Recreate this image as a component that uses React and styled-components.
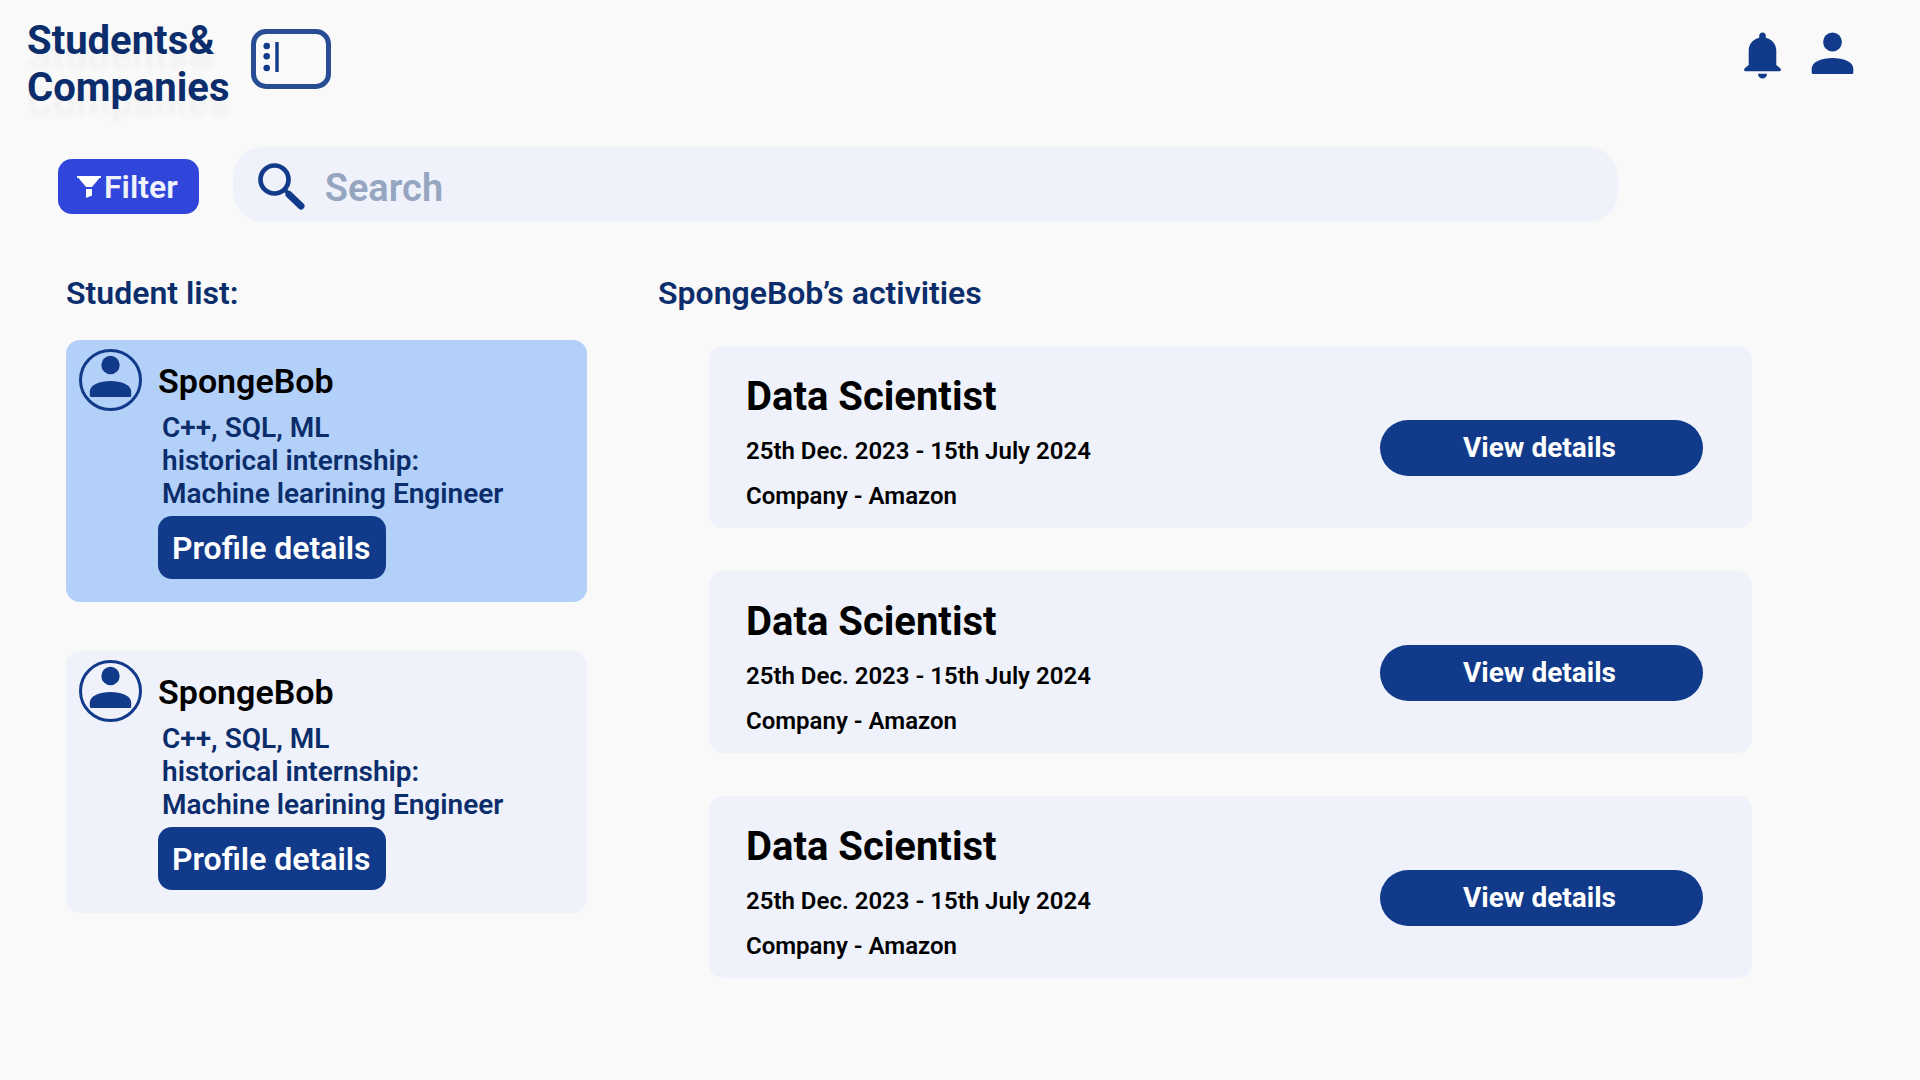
import React from "react";
import styled, { createGlobalStyle } from "styled-components";

const color = {
  page: "#f9f9f9",
  panel: "#eff2fa",
  selected: "#b3d1f8",
  brand: "#113a8a",
  heading: "#0b2d6b",
  accent: "#3046db",
  muted: "#96a5c0",
};

const GlobalStyle = createGlobalStyle`
  *, *::before, *::after { box-sizing: border-box; }
  body {
    margin: 0;
    background: ${color.page};
    font-family: Roboto, "Liberation Sans", sans-serif;
    font-weight: 600;
  }
  h1, h2, h3, p, ul { margin: 0; padding: 0; }
  ul { list-style: none; }
  button { font-family: inherit; border: 0; cursor: pointer; white-space: nowrap; }
  svg { display: block; flex: none; }
`;

const Header = styled.header`
  display: flex;
  align-items: flex-start;
  padding: 17px 66px 0 27px;
`;

const Brand = styled.h1`
  color: ${color.heading};
  font-size: 40px;
  font-weight: 700;
  line-height: 47px;
  text-shadow: 0 15px 4px rgba(0, 0, 0, 0.03);
`;

const IconButton = styled.button`
  display: flex;
  padding: 0;
  background: none;
  color: ${color.brand};
`;

const MenuButton = styled(IconButton)`
  margin: 12px auto 0 22px;
`;

const HeaderActions = styled.div`
  display: flex;
  gap: 30px;
  padding-top: 15px;
`;

const Toolbar = styled.form`
  display: flex;
  align-items: center;
  gap: 34px;
  padding: 36px 302px 0 58px;
`;

const FilterButton = styled.button`
  display: flex;
  align-items: center;
  gap: 3px;
  height: 55px;
  margin-top: 3px;
  padding: 2px 21px 0 19px;
  border-radius: 14px;
  background: ${color.accent};
  color: ${color.panel};
  font-size: 32px;
  font-weight: 600;
`;

const SearchBox = styled.label`
  flex: 1;
  display: flex;
  align-items: center;
  gap: 20px;
  height: 75px;
  padding: 4px 25px 0;
  border-radius: 30px;
  background: ${color.panel};
  color: ${color.brand};
`;

const SearchInput = styled.input`
  flex: 1;
  min-width: 0;
  padding: 3px 0 0;
  border: 0;
  outline: 0;
  background: none;
  color: ${color.heading};
  font: 600 38px/46px Roboto, "Liberation Sans", sans-serif;
  &::placeholder { color: ${color.muted}; opacity: 1; }
`;

const Main = styled.main`
  display: grid;
  grid-template-columns: 521px 1fr;
  gap: 71px;
  padding: 52px 168px 48px 66px;
`;

const SectionTitle = styled.h2`
  color: ${color.heading};
  font-size: 32px;
  font-weight: 600;
  line-height: 38px;
`;

const StudentList = styled.ul`
  display: grid;
  gap: 49px;
  padding-top: 28px;
`;

const StudentCard = styled.li`
  display: grid;
  grid-template-columns: 63px 1fr;
  column-gap: 16px;
  padding: 9px 13px 23px;
  border-radius: 14px;
  background: ${(p) => (p.$selected ? color.selected : color.panel)};
  color: ${color.brand};
`;

const StudentBody = styled.div`
  padding-top: 12px;
`;

const StudentName = styled.h3`
  color: #000;
  font-size: 34px;
  font-weight: 600;
  line-height: 40px;
`;

const StudentFacts = styled.div`
  padding: 10px 0 6px 4px;
  color: ${color.heading};
  font-size: 28px;
  line-height: 33px;
`;

const ProfileButton = styled.button`
  height: 63px;
  padding: 0 15px 0 14px;
  border-radius: 14px;
  background: ${color.brand};
  color: #fff;
  font-size: 32px;
  font-weight: 600;
`;

const ActivityList = styled.ul`
  display: grid;
  gap: 43px;
  padding: 34px 0 0 51px;
`;

const ActivityCard = styled.li`
  display: flex;
  align-items: flex-start;
  justify-content: space-between;
  padding: 27px 49px 18px 37px;
  border-radius: 14px;
  background: ${color.panel};
`;

const ActivityTitle = styled.h3`
  font-size: 40px;
  font-weight: 700;
  line-height: 47px;
`;

const ActivityFact = styled.p`
  padding-top: 17px;
  font-size: 24px;
  line-height: 28px;
`;

const ViewButton = styled.button`
  width: 323px;
  height: 56px;
  margin-top: 47px;
  padding: 0 4px 2px 0;
  border-radius: 28px;
  background: ${color.brand};
  color: #fff;
  font-size: 28px;
  font-weight: 700;
`;

const PanelIcon = () => (
  <svg width="80" height="60" viewBox="0 0 80 60" fill="currentColor" aria-hidden="true">
    <rect x="2.5" y="2.5" width="75" height="55" rx="12.5" fill="none" stroke="currentColor" strokeWidth="5" opacity="0.9" />
    <circle cx="15.7" cy="17" r="3.3" />
    <circle cx="15.7" cy="27.3" r="3.3" />
    <circle cx="15.7" cy="39" r="3.3" />
    <rect x="24.300" y="13" width="3.400" height="30" />
  </svg>
);

const BellIcon = () => (
  <svg width="37" height="47" viewBox="0 0 37 47" fill="currentColor" aria-hidden="true">
    <path d="M18.500 0.500C20.500 0.500 21.800 2 21.800 3.600V5.700C28 7 32.300 12 32.300 18.500V33L36.200 36.200C37.600 37.600 36.800 39.300 35 39.300H2C.2 39.300-.6 37.600.8 36.200L4.700 33V18.500C4.700 12 9 7 15.200 5.700V3.600C15.200 2 16.500 0.500 18.500 0.500Z" />
    <path d="M14 41.700H23C23 44.500 21 46.500 18.500 46.500S14 44.500 14 41.700Z" />
  </svg>
);

const PersonIcon = () => (
  <svg width="43" height="43" viewBox="0 0 43 43" fill="currentColor" aria-hidden="true">
    <circle cx="21.500" cy="10" r="9.400" />
    <path d="M.7 36.500C.7 30 11 26 21.500 26S42.300 30 42.300 36.500V40.500Q42.300 42 40.800 42H2.200Q.7 42 .7 40.500Z" />
  </svg>
);

const FilterIcon = () => (
  <svg width="24" height="22" viewBox="0 0 24 22" fill="#fff" aria-hidden="true">
    <path d="M0 0H24V2H22.500L15 11H9L1.500 2H0Z" />
    <path d="M9 13H15V19.500L9 22Z" />
  </svg>
);

const SearchIcon = () => (
  <svg width="47" height="47" viewBox="0 0 47 47" aria-hidden="true" fill="none" stroke="currentColor">
    <circle cx="16.500" cy="16.500" r="14" strokeWidth="4.700" />
    <path d="M27 27L30 30" strokeWidth="4" />
    <path d="M31 31.500L43 43" strokeWidth="7" strokeLinecap="round" />
  </svg>
);

const AvatarIcon = () => (
  <svg width="63" height="62" viewBox="0 0 63 62" fill="currentColor" aria-hidden="true">
    <ellipse cx="31.500" cy="31" rx="30" ry="29.500" fill="none" stroke="currentColor" strokeWidth="3" />
    <circle cx="31.500" cy="16" r="9.200" />
    <path d="M10.800 42.500C10.800 36 21 32 31.500 32S52.200 36 52.200 42.500V46.500Q52.200 48 50.700 48H12.300Q10.800 48 10.800 46.500Z" />
  </svg>
);

const students = [
  { id: 1, name: "SpongeBob", skills: "C++, SQL, ML", internship: "Machine learining Engineer", selected: true },
  { id: 2, name: "SpongeBob", skills: "C++, SQL, ML", internship: "Machine learining Engineer", selected: false },
];

const activities = [1, 2, 3].map((id) => ({
  id,
  title: "Data Scientist",
  dates: "25th Dec. 2023 - 15th July 2024",
  company: "Amazon",
}));

function Student({ student }) {
  return (
    <StudentCard $selected={student.selected}>
      <AvatarIcon />
      <StudentBody>
        <StudentName>{student.name}</StudentName>
        <StudentFacts>
          <p>{student.skills}</p>
          <p>historical internship:</p>
          <p>{student.internship}</p>
        </StudentFacts>
        <ProfileButton type="button">Profile details</ProfileButton>
      </StudentBody>
    </StudentCard>
  );
}

function Activity({ activity }) {
  return (
    <ActivityCard>
      <div>
        <ActivityTitle>{activity.title}</ActivityTitle>
        <ActivityFact>{activity.dates}</ActivityFact>
        <ActivityFact>Company - {activity.company}</ActivityFact>
      </div>
      <ViewButton type="button">View details</ViewButton>
    </ActivityCard>
  );
}

export default function App() {
  return (
    <>
      <GlobalStyle />
      <Header>
        <Brand>
          Students&amp;
          <br />
          Companies
        </Brand>
        <MenuButton type="button" aria-label="Toggle side panel">
          <PanelIcon />
        </MenuButton>
        <HeaderActions>
          <IconButton type="button" aria-label="Notifications">
            <BellIcon />
          </IconButton>
          <IconButton type="button" aria-label="Account">
            <PersonIcon />
          </IconButton>
        </HeaderActions>
      </Header>
      <Toolbar role="search" onSubmit={(e) => e.preventDefault()}>
        <FilterButton type="button">
          <FilterIcon />
          Filter
        </FilterButton>
        <SearchBox>
          <SearchIcon />
          <SearchInput type="text" placeholder="Search" aria-label="Search" />
        </SearchBox>
      </Toolbar>
      <Main>
        <section>
          <SectionTitle>Student list:</SectionTitle>
          <StudentList>
            {students.map((s) => (
              <Student key={s.id} student={s} />
            ))}
          </StudentList>
        </section>
        <section>
          <SectionTitle>SpongeBob’s activities</SectionTitle>
          <ActivityList>
            {activities.map((a) => (
              <Activity key={a.id} activity={a} />
            ))}
          </ActivityList>
        </section>
      </Main>
    </>
  );
}
